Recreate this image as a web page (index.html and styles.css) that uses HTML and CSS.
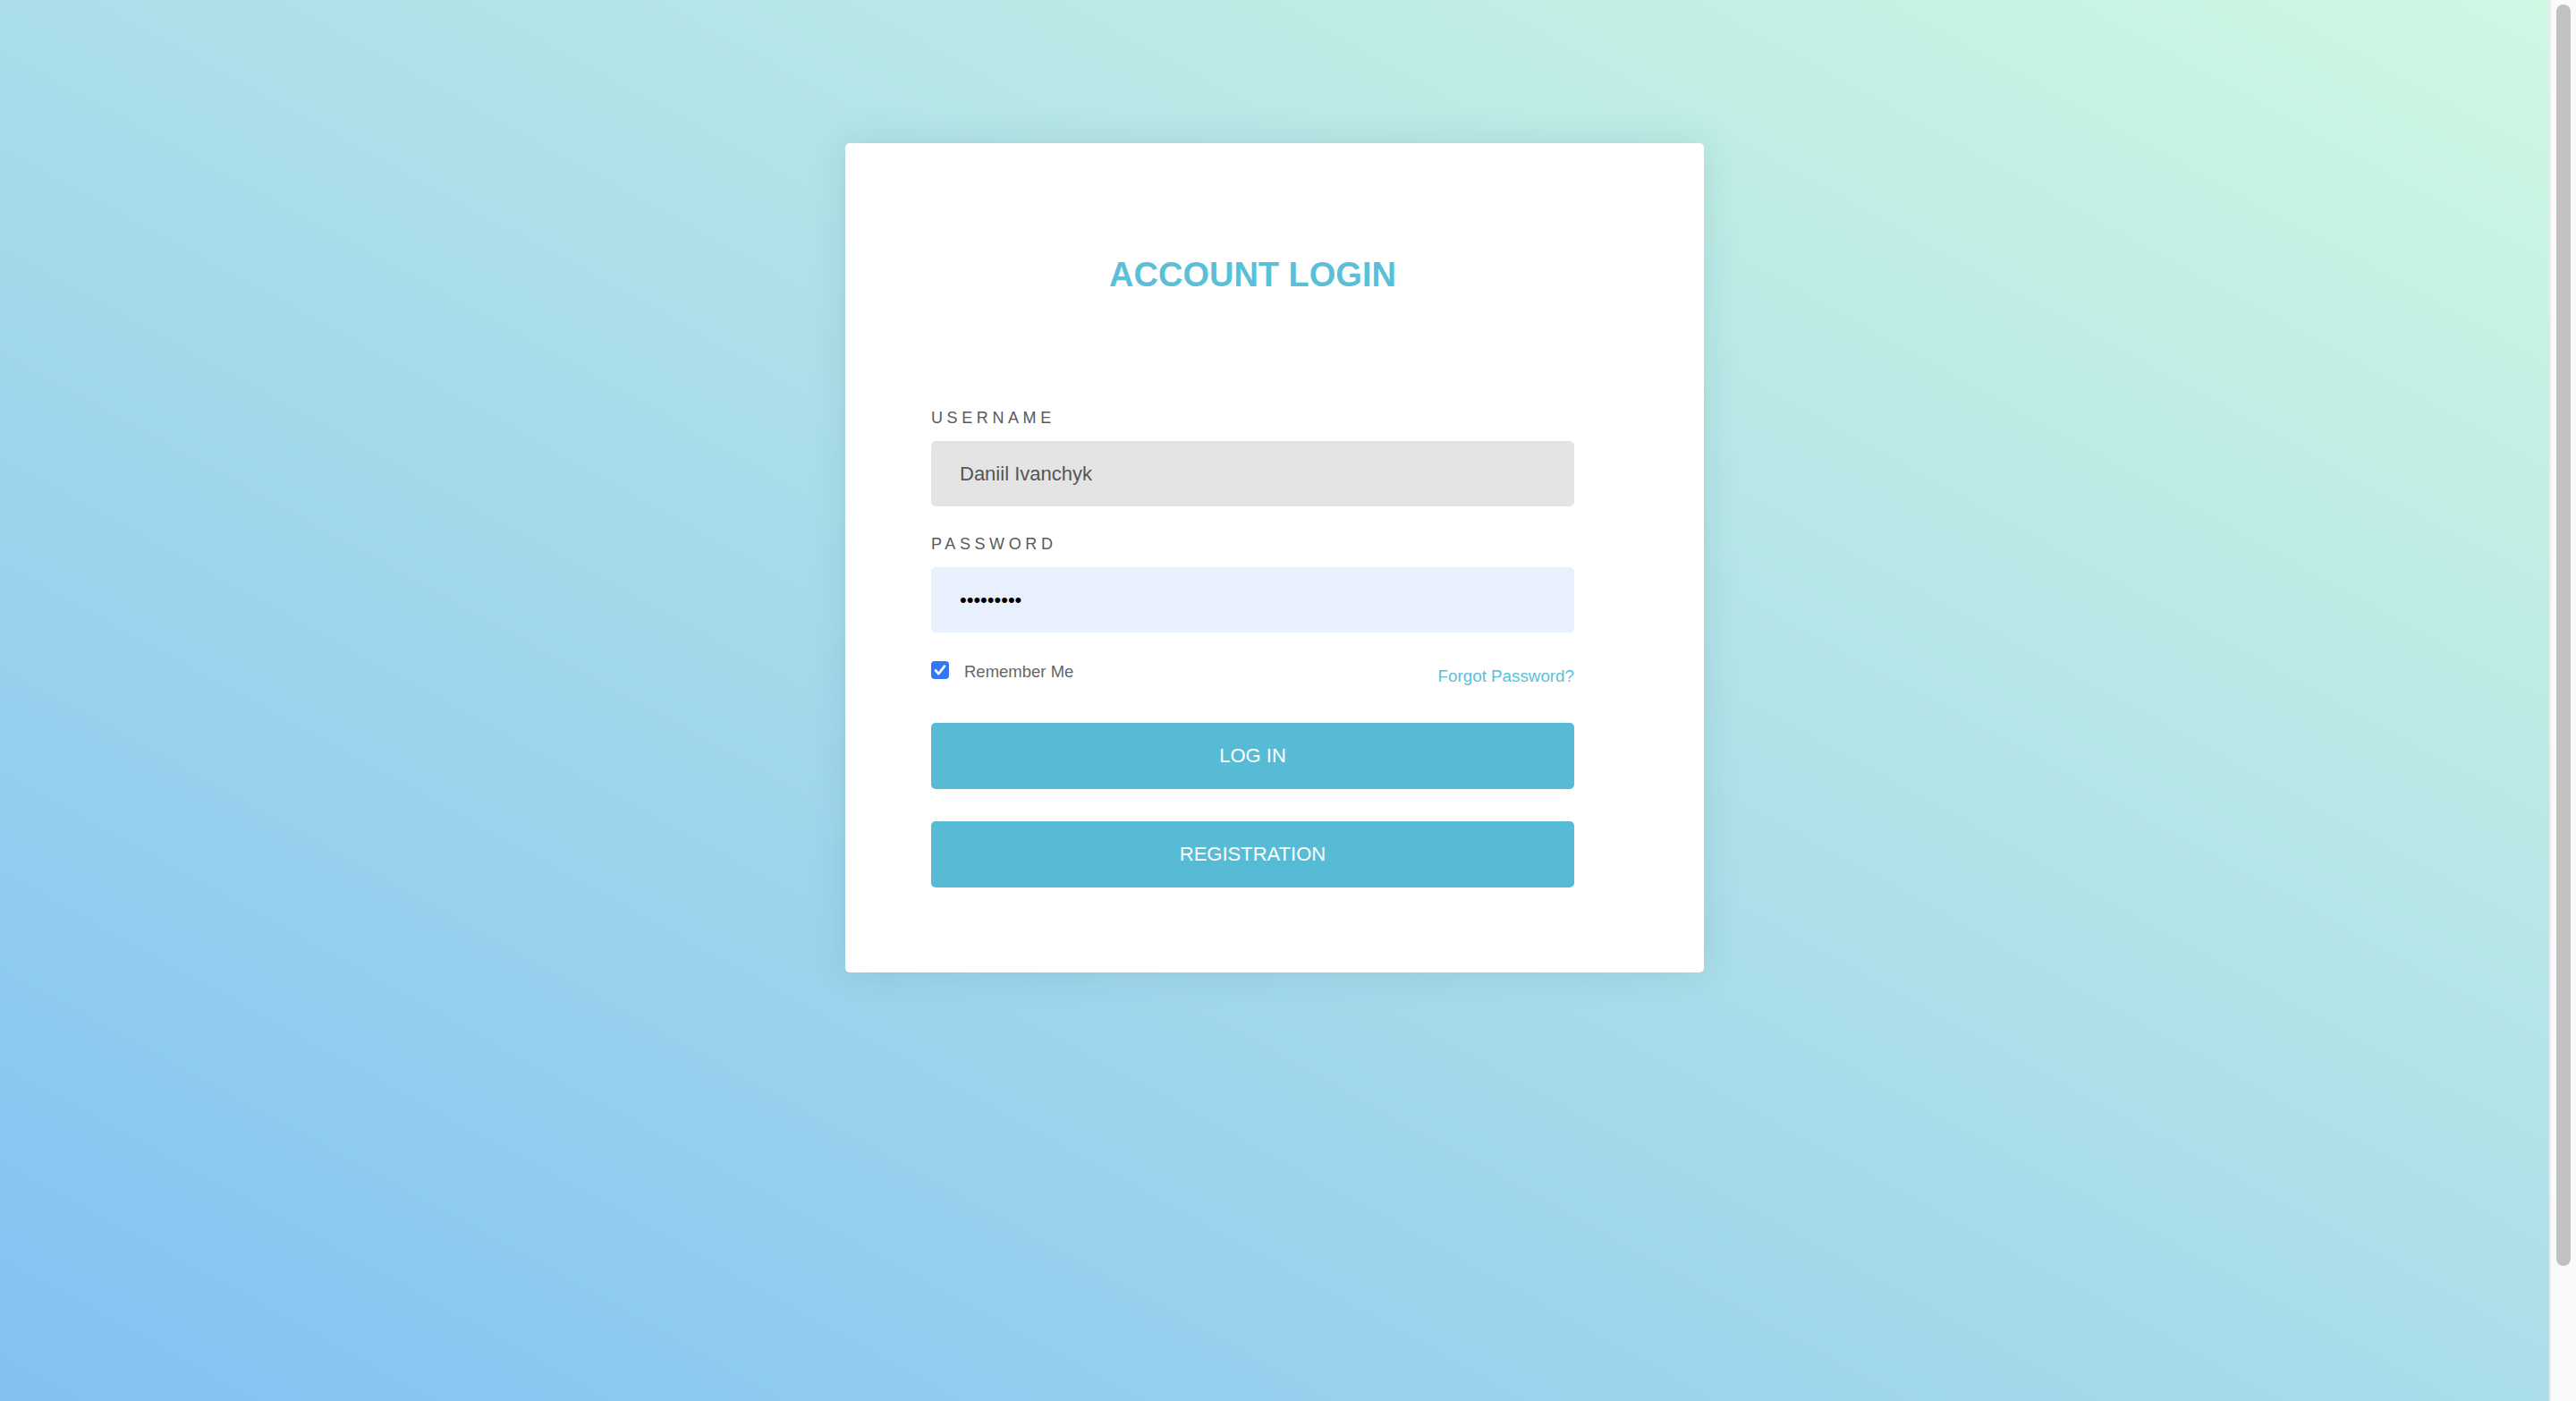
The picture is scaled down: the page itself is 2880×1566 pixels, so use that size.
FILE: index.html
```html
<!DOCTYPE html>
<html lang="en">
<head>
<meta charset="utf-8">
<title>Account Login</title>
<link rel="stylesheet" href="styles.css">
</head>
<body>
<main class="page">
  <form class="card">
    <h1 class="title">ACCOUNT LOGIN</h1>
    <label class="field-label" for="username">USERNAME</label>
    <input class="field field-user" id="username" type="text" value="Daniil Ivanchyk">
    <label class="field-label field-label-pass" for="password">PASSWORD</label>
    <input class="field field-pass" id="password" type="password" value="123456789">
    <div class="options">
      <label class="remember">
        <span class="check"><svg viewBox="0 0 20 20" width="20" height="20"><path d="M5 10.4 L8.3 14.2 L15 5.6" fill="none" stroke="#fff" stroke-width="2.6" stroke-linecap="round" stroke-linejoin="round"/></svg></span>
        <span class="remember-text">Remember Me</span>
      </label>
      <a class="forgot" href="#">Forgot Password?</a>
    </div>
    <button class="btn" type="button">LOG IN</button>
    <button class="btn btn-reg" type="button">REGISTRATION</button>
  </form>
</main>
<div class="scrollbar" aria-hidden="true">
  <div class="scrollbar-thumb"></div>
</div>
</body>
</html>
```

FILE: styles.css
```css
html {
  margin: 0;
  padding: 0;
  height: 100%;
}

body {
  margin: 0;
  padding: 0;
  height: 100%;
  display: flex;
  overflow: hidden;
  font-family: "Liberation Sans", Arial, Helvetica, sans-serif;
}

.page {
  flex: 1;
  display: flex;
  justify-content: center;
  align-items: flex-start;
  padding-top: 160px;
  background: linear-gradient(to top right, #83c1f2 0%, #abdeea 50%, #cff9e3 100%);
}

.scrollbar {
  box-sizing: border-box;
  width: 30px;
  flex: none;
  background: #fafafa;
  border-left: 2px solid #ececec;
  padding: 5px 6px 0 6px;
}

.scrollbar-thumb {
  height: 1410px;
  border-radius: 9px;
  background: #c1c1c1;
}

.card {
  box-sizing: border-box;
  width: 960px;
  padding: 125px 145px 95px 96px;
  background: #ffffff;
  border-radius: 5px;
  box-shadow: 0 0 40px rgba(40, 90, 110, 0.14);
  display: flex;
  flex-direction: column;
}

.title {
  margin: 0 0 127px 0;
  font-size: 38px;
  line-height: 44px;
  font-weight: bold;
  color: #5abfd7;
  text-align: center;
}

.field-label {
  display: block;
  font-size: 18px;
  line-height: 22px;
  letter-spacing: 4.6px;
  color: #5a5a5a;
  margin-bottom: 15px;
}

.field-label-pass {
  margin-top: 31px;
}

.field {
  display: block;
  box-sizing: border-box;
  width: 100%;
  height: 73px;
  margin: 0;
  padding: 0 32px;
  border: none;
  border-radius: 5px;
  outline: none;
  font-family: "Liberation Sans", Arial, Helvetica, sans-serif;
  font-size: 22px;
}

.field-user {
  background: #e4e4e4;
  color: #555555;
}

.field-pass {
  background: #e8f0fe;
  color: #000000;
}

.options {
  display: flex;
  justify-content: space-between;
  align-items: flex-start;
  margin-top: 32px;
  height: 28px;
  margin-bottom: 41px;
}

.remember {
  display: flex;
  align-items: flex-start;
}

.check {
  display: block;
  width: 20px;
  height: 20px;
  border-radius: 4px;
  background: #3379f6;
}

.check svg {
  display: block;
}

.remember-text {
  margin-left: 17px;
  margin-top: 2px;
  font-size: 18.5px;
  line-height: 20px;
  color: #666666;
}

.forgot {
  margin-top: 6px;
  font-size: 18.8px;
  line-height: 22px;
  color: #5bbfd9;
  text-decoration: none;
}

.btn {
  display: block;
  width: 100%;
  height: 74px;
  margin: 0;
  border: none;
  border-radius: 5px;
  background: #58bbd5;
  color: #ffffff;
  font-family: "Liberation Sans", Arial, Helvetica, sans-serif;
  font-size: 22px;
  cursor: pointer;
}

.btn-reg {
  margin-top: 36px;
}
```
